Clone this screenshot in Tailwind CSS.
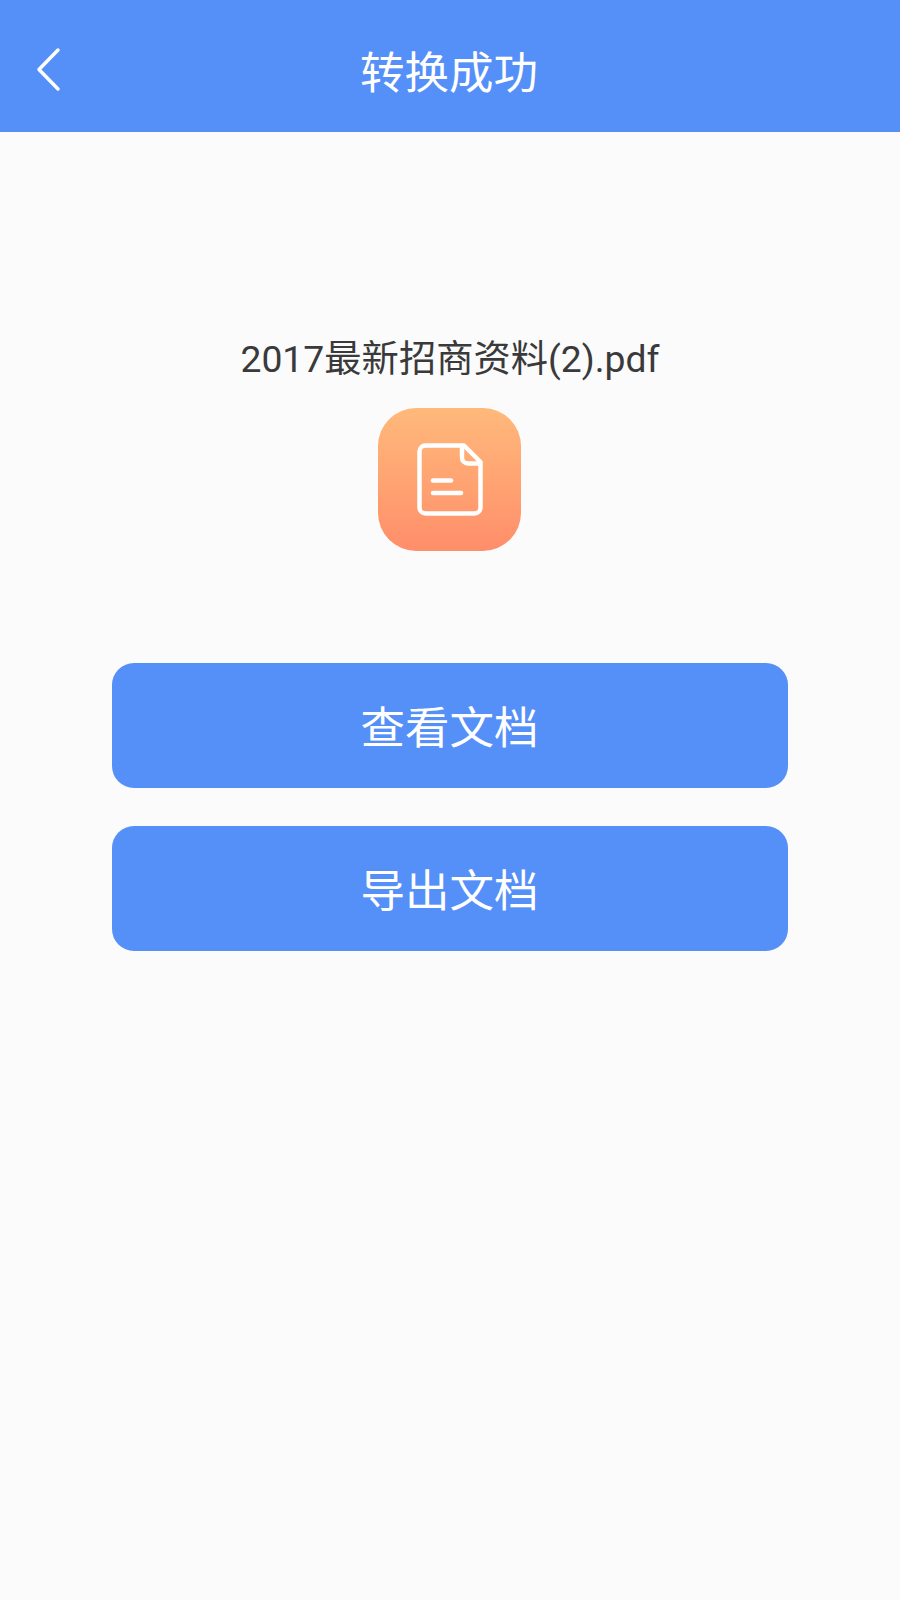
<!DOCTYPE html>
<html lang="zh-CN">
<head>
<meta charset="utf-8">
<script src="https://cdn.jsdelivr.net/npm/@tailwindcss/browser@4"></script>
<title>转换成功</title>
</head>
<body class="m-0">
<div class="w-[900px] h-[1600px] bg-[#fbfbfc] flex flex-col overflow-hidden font-['Roboto','Noto_Sans_CJK_SC',sans-serif]">
  <header class="relative h-[132px] bg-[#558ff8] flex items-center justify-center shrink-0 pt-[16px]">
    <svg class="absolute left-[34px] top-[46px]" width="30" height="48" viewBox="0 0 30 48" fill="none" stroke="#ffffff" stroke-width="3.5" stroke-linecap="round" stroke-linejoin="round"><path d="M24 4 L5 23.5 L24 43"/></svg>
    <h1 class="mr-[2px] text-[44.5px] leading-[60px] font-normal text-white">转换成功</h1>
  </header>
  <main class="flex flex-col items-center pt-[202px]">
    <p class="text-[37.3px] leading-[50px] text-[#3a3a3a]">2017最新招商资料(2).pdf</p>
    <div class="mt-[24px] ml-[-1px] w-[143px] h-[143px] rounded-[38px] bg-gradient-to-b from-[#ffb97b] to-[#ff8e6a] flex items-center justify-center">
      <svg width="72" height="80" viewBox="0 0 72 80" fill="none" stroke="#ffffff" stroke-width="4.5" stroke-linecap="round" stroke-linejoin="round"><path d="M11.5 5.5 H50 L66.5 22 V67.5 A6 6 0 0 1 60.5 73.5 H11.5 A6 6 0 0 1 5.5 67.5 V11.5 A6 6 0 0 1 11.5 5.5 Z"/><path d="M48 6 V17.5 A6 6 0 0 0 54 23.5 H66"/><path d="M19 40.5 H37"/><path d="M19 53 H47"/></svg>
    </div>
    <button class="mt-[112px] w-[676px] h-[125px] pt-[8px] mr-[1px] rounded-[22px] bg-[#558ff8] text-white text-[44.5px]">查看文档</button>
    <button class="mt-[38px] w-[676px] h-[125px] pt-[7px] mr-[1px] rounded-[22px] bg-[#558ff8] text-white text-[44.5px]">导出文档</button>
  </main>
</div>
</body>
</html>
